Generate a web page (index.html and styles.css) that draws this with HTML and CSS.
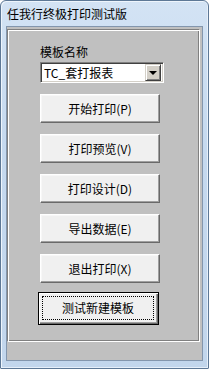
FILE: index.html
```html
<!DOCTYPE html>
<html>
<head>
<meta charset="utf-8">
<link rel="stylesheet" href="styles.css">
</head>
<body>
<div class="window">
  <div class="titlebar">任我行终极打印测试版</div>
  <div class="client">
    <div class="panel">
      <div class="label">模板名称</div>
      <div class="combo">
        <span class="combo-text">TC_套打报表</span>
        <span class="combo-btn"><span class="arrow"></span></span>
      </div>
      <div class="btn">开始打印(P)</div>
      <div class="btn">打印预览(V)</div>
      <div class="btn">打印设计(D)</div>
      <div class="btn">导出数据(E)</div>
      <div class="btn">退出打印(X)</div>
      <div class="btn default"><span class="focus">测试新建模板</span></div>
    </div>
  </div>
</div>
</body>
</html>
```
FILE: styles.css
```css
html, body {
  margin: 0;
  padding: 0;
  width: 209px;
  height: 369px;
  overflow: hidden;
  background: #ffffff;
}
.window {
  box-sizing: border-box;
  width: 209px;
  height: 369px;
  display: flex;
  flex-direction: column;
  background: linear-gradient(#d3e3f4, #c5d9ef 40%, #c2d6ec);
  border: 1px solid #5d7896;
  border-radius: 6px 6px 1px 1px;
  box-shadow: inset 1px 1px 0 #eef5fc, inset -1px -1px 0 #e6eff9;
  padding: 0 5px 7px 5px;
  font-family: "Noto Sans CJK SC", "Noto Sans", sans-serif;
  font-size: 12px;
  color: #000;
}
.titlebar {
  flex: none;
  height: 25px;
  line-height: 25px;
  padding-left: 1px;
  font-size: 12px;
  white-space: nowrap;
}
.client {
  flex: 1;
  background: #c0c0c0;
  border: 1px solid #8396ad;
  padding: 2px 2px 0 0;
}
.panel {
  box-sizing: border-box;
  height: 313px;
  border-top: 1px solid #808080;
  border-left: 1px solid #808080;
  border-right: 1px solid #ffffff;
  border-bottom: 1px solid #ffffff;
  box-shadow: inset 1px 1px 0 #ffffff, inset -1px -1px 0 #808080;
  padding: 14px 0 0 32px;
  display: flex;
  flex-direction: column;
  align-items: flex-start;
}
.label {
  height: 16px;
  line-height: 16px;
  font-size: 12px;
}
.combo {
  box-sizing: border-box;
  margin-top: 2px;
  width: 124px;
  height: 21px;
  background: #ffffff;
  border-top: 1px solid #808080;
  border-left: 1px solid #808080;
  border-right: 1px solid #ffffff;
  border-bottom: 1px solid #ffffff;
  box-shadow: inset 1px 1px 0 #404040, inset -1px -1px 0 #d4d0c8;
  display: flex;
  align-items: center;
  padding: 0 2px 0 3px;
}
.combo-text {
  flex: 1;
  line-height: 17px;
  font-size: 12px;
}
.combo-btn {
  box-sizing: border-box;
  width: 16px;
  height: 17px;
  background: #d4d0c8;
  border-top: 1px solid #d4d0c8;
  border-left: 1px solid #d4d0c8;
  border-right: 1px solid #404040;
  border-bottom: 1px solid #404040;
  box-shadow: inset 1px 1px 0 #ffffff, inset -1px -1px 0 #808080;
  display: flex;
  align-items: center;
  justify-content: center;
}
.arrow {
  width: 0;
  height: 0;
  border-left: 4px solid transparent;
  border-right: 4px solid transparent;
  border-top: 4px solid #000;
  margin-top: 1px;
}
.btn {
  box-sizing: border-box;
  width: 120px;
  height: 29px;
  margin-top: 11px;
  background: #f0f0f0;
  border-top: 1px solid #ffffff;
  border-left: 1px solid #ffffff;
  border-right: 1px solid #696969;
  border-bottom: 1px solid #696969;
  box-shadow: inset -1px -1px 0 #a0a0a0, inset 1px 1px 0 #f7f7f7;
  display: flex;
  align-items: center;
  justify-content: center;
  font-size: 12px;
  line-height: 16px;
}
.btn.default {
  width: 121px;
  height: 33px;
  margin-top: 9px;
  margin-left: -2px;
  border: 1px solid #000;
  box-shadow: inset 1px 1px 0 #ffffff, inset -1px -1px 0 #696969, inset -2px -2px 0 #a0a0a0;
  padding: 3px 4px 4px 3px;
}
.focus {
  box-sizing: border-box;
  width: 100%;
  height: 100%;
  border: 1px dotted #000;
  display: flex;
  align-items: center;
  justify-content: center;
}
```
